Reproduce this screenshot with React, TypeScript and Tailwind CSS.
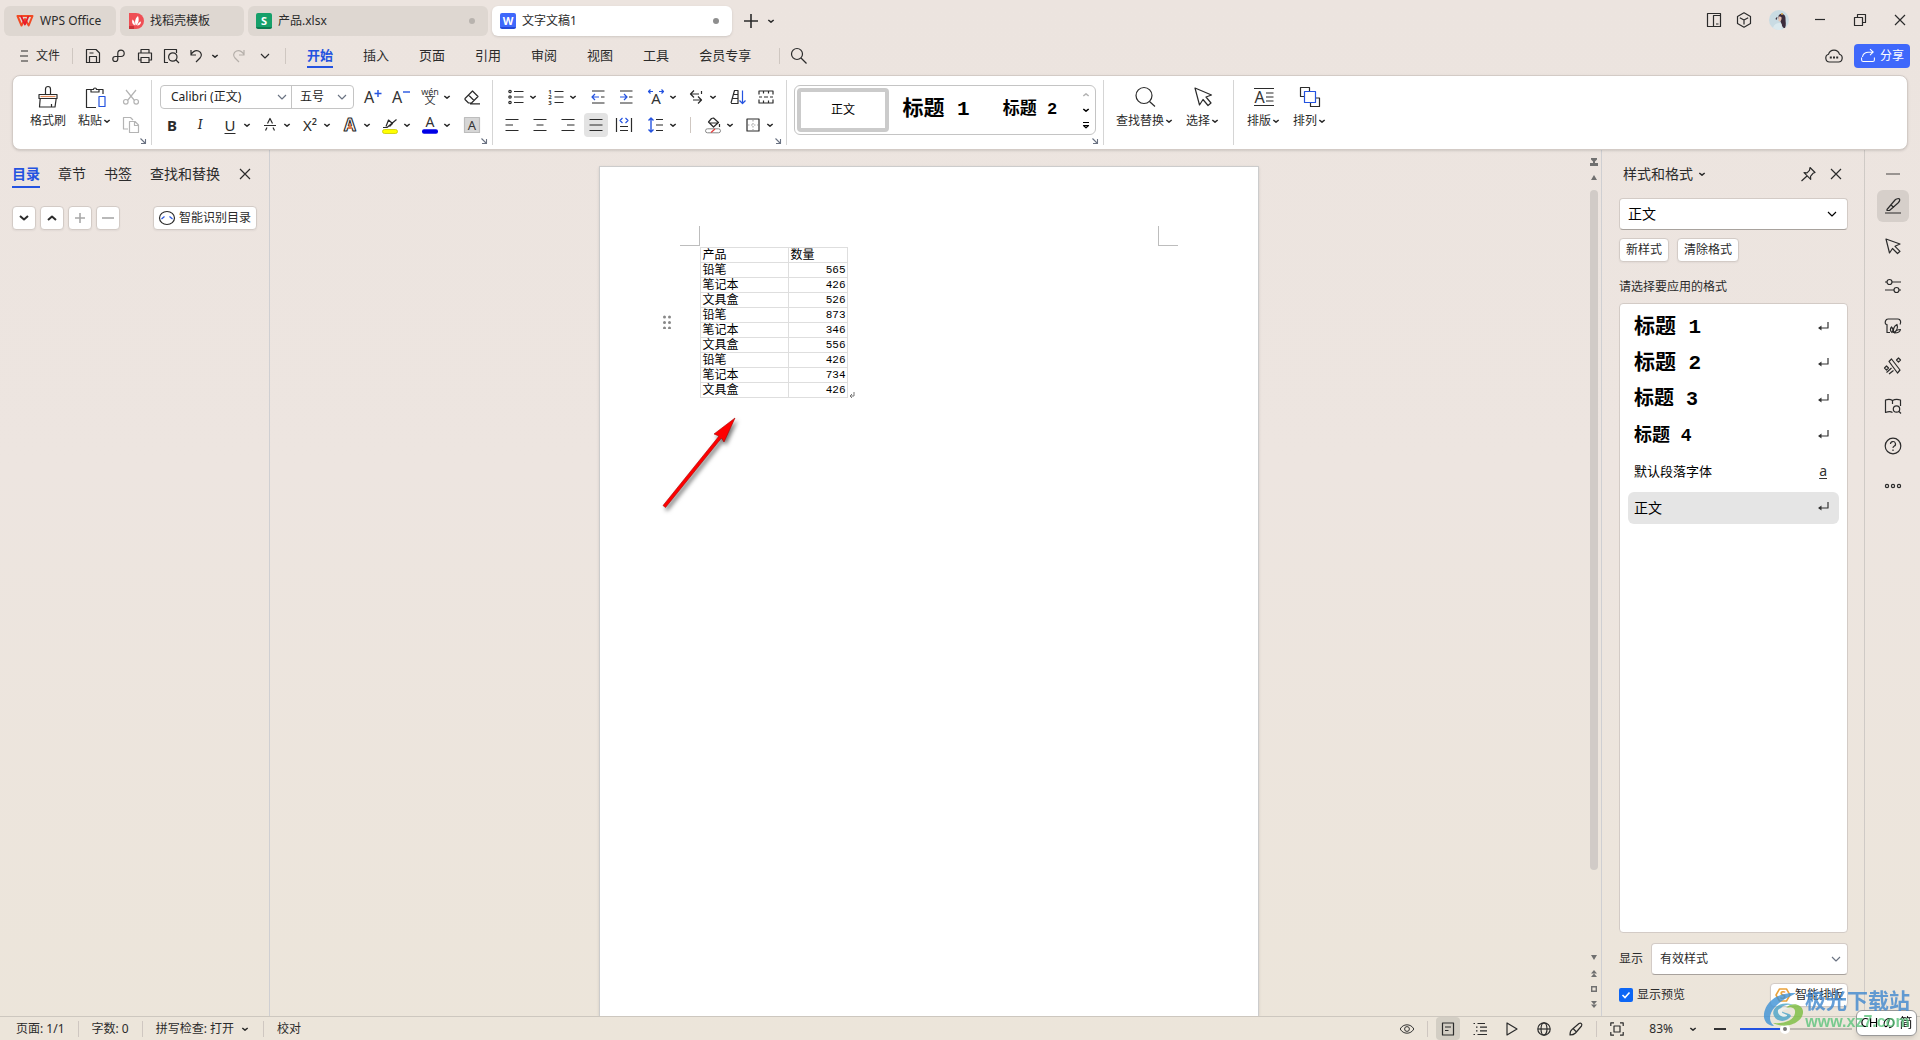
import React from "react";
import clsx from "clsx";

type IconProps = {
  children: React.ReactNode;
  className?: string;
  box?: number;
};

const Icon = ({ children, className = "w-5 h-5", box = 20 }: IconProps) => (
  <svg
    viewBox={`0 0 ${box} ${box}`}
    className={clsx("shrink-0 overflow-visible", className)}
    fill="none"
    stroke="currentColor"
    strokeWidth="1.2"
    strokeLinejoin="round"
    aria-hidden="true"
  >
    {children}
  </svg>
);

// Small bold arrow beside split buttons
const Caret = () => (
  <Icon className="w-2.5 h-2.5" box={10}>
    <path d="M2.300 4 5 6.200 7.700 4" strokeWidth="1.5" />
  </Icon>
);

// Thin arrow inside drop-downs
const Chevron = ({ className }: { className?: string }) => (
  <Icon className={clsx("w-2.5 h-2.5", className)} box={10}>
    <path d="M1 3 5 7 9 3" strokeWidth="1.1" />
  </Icon>
);

const Glyph = ({ x, y, size, children, fill = "#333", weight = 400 }: any) => (
  <text
    x={x}
    y={y}
    fontSize={size}
    fill={fill}
    stroke="none"
    fontWeight={weight}
    textAnchor="middle"
    fontFamily="Noto Sans, Noto Sans CJK SC, sans-serif"
  >
    {children}
  </text>
);

const BLUE = "#2453e0";

const icons = {
  brush: (
    <Icon className="w-6 h-6" box={24}>
      <path d="M3 9.500h18v4H3zM4.200 13.500 3.500 22h15.500l1.200-8.500M9.500 9.500V4a2.500 2.500 0 0 1 5 0v5.500M15.500 22v-3" />
      <path d="M4.500 11.500h15" stroke="#e08a5b" />
    </Icon>
  ),
  paste: (
    <Icon className="w-6 h-6" box={24}>
      <path d="M8 4.500H3.500v18H13M16 4.500h4V9M8 7V4.500h2.500a1.500 1.500 0 0 1 3 0H16V7z" />
      <path d="M16 11.500h6v10h-6z" stroke={BLUE} />
    </Icon>
  ),
  cut: (
    <Icon>
      <path d="M5 3l8.500 10.500M15 3 6.500 13.500" />
      <circle cx="4.800" cy="14.800" r="2.300" />
      <circle cx="15.200" cy="14.800" r="2.300" />
    </Icon>
  ),
  copy: (
    <Icon>
      <path d="M7 14H2.500V2.500h7L12 5M8.500 6.500h5.500l3.500 3.500v7.500h-9zM13.500 6.500V10.500h4" />
    </Icon>
  ),
  save: (
    <Icon>
      <path d="M3.500 3.500h9.500l3.500 3.500v9.500h-13zM6.500 16.500v-6h7v6M6.500 7h4" />
    </Icon>
  ),
  route: (
    <Icon>
      <path d="M7 10.500h5a3.200 3.200 0 1 0-3.200-3.200M13 10.500H6.300a2.500 2.500 0 1 0 2.500 2.500V7.300" />
    </Icon>
  ),
  print: (
    <Icon>
      <path d="M6 7V3.500h8V7M6 14H3.500V7h13v7H14M6 11.500h8v5H6z" />
    </Icon>
  ),
  preview: (
    <Icon>
      <path d="M7 16.500H3.500v-13h12V7M15 14l3 3" />
      <circle cx="11.800" cy="11" r="4.200" />
    </Icon>
  ),
  undo: (
    <Icon>
      <path d="M5 4v5h5M5 8.500c2-3 5-4.500 7.500-3.500 3.500 1.500 3.500 5 1.500 7L10 16" />
    </Icon>
  ),
  redo: (
    <Icon>
      <path d="M15 4v5h-5M15 8.500c-2-3-5-4.500-7.500-3.500C4 6.500 4 10 6 12l4 4" />
    </Icon>
  ),
  search: (
    <Icon>
      <circle cx="8" cy="8" r="5.500" />
      <path d="m12 12 5.500 5.500" />
    </Icon>
  ),
  fontUp: (
    <Icon>
      <Glyph x={7} y={16} size={16}>A</Glyph>
      <path d="M12.500 6.500h7M16 3v7" stroke={BLUE} strokeWidth="1.4" />
    </Icon>
  ),
  fontDown: (
    <Icon>
      <Glyph x={7} y={16} size={16}>A</Glyph>
      <path d="M13 5h7" stroke={BLUE} strokeWidth="1.4" />
    </Icon>
  ),
  pinyin: (
    <Icon>
      <Glyph x={10} y={8} size={9}>wén</Glyph>
      <Glyph x={10} y={17} size={11}>文</Glyph>
    </Icon>
  ),
  eraser: (
    <Icon>
      <path d="m3 11.500 7.500-7.500 5.500 5.500-6.500 6.500H6.500L3 12.500zM6.500 8 12 13.500M8 16.800h10" />
    </Icon>
  ),
  strike: (
    <Icon>
      <path d="M4 10.500h12M7.500 8.500 10 3.500l2.500 5M5.500 15.500 7 12.500M14.500 15.500 13 12.500" />
    </Icon>
  ),
  outlineA: (
    <Icon>
      <text x="10" y="16" fontSize="17" textAnchor="middle" fontWeight="700" fill="#fff" strokeWidth="1.1" fontFamily="Noto Sans, sans-serif">A</text>
      <path d="M10 8.500 8 13.500h4z" fill="#e07b45" stroke="#e07b45" strokeWidth=".8" />
    </Icon>
  ),
  highlight: (
    <Icon>
      <path d="M3 12.500h4l9.500-8M6 11.500 8.500 5l4 3.500-3 3" />
      <rect x="2.500" y="14.500" width="15" height="4" rx="2" fill="#ffff00" stroke="#c9c900" strokeWidth=".8" />
    </Icon>
  ),
  fontColor: (
    <Icon>
      <Glyph x={10} y={12} size={14}>A</Glyph>
      <rect x="2" y="14.200" width="16" height="4.600" rx="2" fill="#0000e6" stroke="none" />
    </Icon>
  ),
  shadedA: (
    <Icon>
      <rect x="2.500" y="2.500" width="15" height="15" fill="#d6d6d6" stroke="#bdbdbd" />
      <Glyph x={10} y={15} size={13}>A</Glyph>
    </Icon>
  ),
  bullets: (
    <Icon>
      <path d="M8 4.500h9.500M8 10h9.500M8 15.500h9.500" />
      <circle cx="4" cy="4.500" r="1.200" />
      <circle cx="4" cy="10" r="1.200" />
      <circle cx="4" cy="15.500" r="1.200" />
    </Icon>
  ),
  numbers: (
    <Icon>
      <path d="M8.500 4.500h9M8.500 10h9M8.500 15.500h9" />
      <Glyph x={4} y={6.500} size={6} weight={700}>1</Glyph>
      <Glyph x={4} y={12.200} size={6} weight={700}>2</Glyph>
      <Glyph x={4} y={18} size={6} weight={700}>3</Glyph>
    </Icon>
  ),
  outdent: (
    <Icon>
      <path d="M4 4h12.500M13 10h3.500M4 16h12.500" />
      <path d="M11 10H4M7 7l-3 3 3 3" stroke={BLUE} />
    </Icon>
  ),
  indent: (
    <Icon>
      <path d="M4 4h12.500M13 10h3.500M4 16h12.500" />
      <path d="M4 10h7M8 7l3 3-3 3" stroke={BLUE} />
    </Icon>
  ),
  charWidth: (
    <Icon>
      <Glyph x={10} y={17} size={15}>A</Glyph>
      <path d="M7 4.500H2.500M4.500 2.500l-2 2 2 2M13 4.500h4.500M15.500 2.500l2 2-2 2" stroke={BLUE} />
    </Icon>
  ),
  wrap: (
    <Icon>
      <path d="M8 3.500 4.500 7H13M4.500 7 8 10.500M12 9.500l3.500 3.500H7M15.500 13 12 16.500M15.500 4v3" />
    </Icon>
  ),
  sort: (
    <Icon>
      <path d="M3 16 6.500 3.500h3.500V16.500H3M5.500 7.500H10M4.500 11.500H10" />
      <path d="M14.500 3.500v13M11.500 13.500l3 3 3-3" stroke={BLUE} />
    </Icon>
  ),
  tableMark: (
    <Icon>
      <path d="M3 7.500V4h14v3.500M3 12.500V16h14v-3.500M7.500 4v2.500M12.500 4v2.500M7.500 16v-2.500M12.500 16v-2.500M3 10h3M8 10h4M14 10h3" />
    </Icon>
  ),
  left: <Icon><path d="M3.500 4.500h13M3.500 10h7.500M3.500 15.500h13" /></Icon>,
  center: <Icon><path d="M3.500 4.500h13M6.500 10h7M3.500 15.500h13" /></Icon>,
  right: <Icon><path d="M3.500 4.500h13M9 10h7.500M3.500 15.500h13" /></Icon>,
  justify: <Icon><path d="M3.500 4.500h13M3.500 10h13M3.500 15.500h13" /></Icon>,
  distribute: (
    <Icon>
      <path d="M2.500 3v14M17.500 3v14M6 11.500h8M6 15.500h8" />
      <path d="M8.500 3 6 5.500 8.500 8M11.500 3 14 5.500 11.500 8" stroke={BLUE} />
    </Icon>
  ),
  lineHeight: (
    <Icon>
      <path d="M10 4.500h7M10 10h7M10 15.500h7" />
      <path d="M5 3v14M2.500 5.500 5 3l2.500 2.500M2.500 14.500 5 17l2.500-2.500" stroke={BLUE} strokeWidth="1.4" />
    </Icon>
  ),
  fill: (
    <Icon>
      <path d="M8.500 3.500 5.500 7l5 5 5-4.500-5-4.500zM6 8h9M16.500 9v3" />
      <rect x="2.500" y="13.800" width="15" height="4" rx="2" fill="#fff" stroke="#888" strokeWidth="1" />
      <path d="m8 17.500 4-3.500" stroke="#e23b3b" />
    </Icon>
  ),
  border: (
    <Icon>
      <rect x="4" y="4" width="12" height="12" />
      <path d="M10 5v10M5 10h10" stroke="#aaa" strokeDasharray="1.500 1.500" />
    </Icon>
  ),
  find: (
    <Icon className="w-6 h-6" box={24}>
      <circle cx="11" cy="10.500" r="8" />
      <path d="m16.500 16.500 5.500 5" />
    </Icon>
  ),
  pointer: (
    <Icon className="w-6 h-6" box={24}>
      <path d="m4 3 4.500 17 3.500-5.500 5 6 3-2.500-5-6 5.500-2z" />
    </Icon>
  ),
  typeset: (
    <Icon className="w-6 h-6" box={24}>
      <path d="M2 3.500h20M2 20.500h20M14 8h7.500M14 12h7.500M14 16h7.500" />
      <Glyph x={7.500} y={17.500} size={16}>A</Glyph>
    </Icon>
  ),
  arrange: (
    <Icon className="w-6 h-6" box={24}>
      <path d="M6 11.500H2.500v-9h9V6M18 13h3.500v8.500h-9V18" />
      <path d="M6.500 6.500h11v11h-11z" stroke={BLUE} />
    </Icon>
  ),
  close: <Icon><path d="m5 5 10 10M15 5 5 15" /></Icon>,
  cloud: (
    <Icon>
      <path d="M5.500 16a4 4 0 0 1-.9-7.800 5.600 5.600 0 0 1 10.800 0 4 4 0 0 1-.9 7.800z" />
      <path d="M5.800 11.500h2M9 11.500h2M12.200 11.500h2" strokeWidth="1.800" />
    </Icon>
  ),
  pin: (
    <Icon>
      <path d="m12 3.500 5 5-2 .8-2.500 3 .2 3-6.700-6.700 3 .2 2.500-2.500zM9 12l-5.500 5" />
    </Icon>
  ),
  pen: (
    <Icon>
      <path d="M2 17h16M4 13.500l8-9.500c1-1 4-2 4.500-1s-.5 3-1.500 4l-8.500 7.500H4zM8 9l3 2.500" />
    </Icon>
  ),
  cursor: (
    <Icon>
      <path d="m3 3 3.500 14 3-4.500 5 5 2.500-2.200-5-5L17 8z" />
    </Icon>
  ),
  sliders: (
    <Icon>
      <circle cx="6.500" cy="6" r="2.500" />
      <circle cx="13.500" cy="14" r="2.500" />
      <path d="M2 6h2M9 6h9M2 14h9M16 14h2" />
    </Icon>
  ),
  material: (
    <Icon>
      <path d="M7 16.500H4V8.500c-2 0-2-2-1.500-3.500s1-2 2.500-2h10c1.500 0 2 .5 2.500 2s0 2.500-.5 3.500" />
      <path d="M9 16.500c-2-1.500-2-4-.5-5.500 1.500 1.500 2 3.500.5 5.500zM10.500 16.500c-.5-3 1-6.500 3.500-8 1 3 0 6.500-3.500 8zM11.500 17c1-2 3.500-3.500 6-3.500-.5 2.500-3 3.500-6 3.500z" />
    </Icon>
  ),
  tools: (
    <Icon>
      <path d="m6 5.500 2.500-2.500 8.500 11-2.500 3zM3.500 16.500l5-4.500M6 18l4.500-3.500M6 5.500l3 4" />
      <path d="m15.500 2 2 2-2 2-2-2zM3.500 10l2 2-2 2-2-2z" />
    </Icon>
  ),
  book: (
    <Icon>
      <path d="M9.500 16.500c-2-1.500-4.500-1-7 0V4c2.500-1 5-1 7 .5 2.500-1.500 5-1.500 8-.5v6M9.500 4.500V8M16 15.500l2 2" />
      <circle cx="13.500" cy="13" r="3.200" />
    </Icon>
  ),
  help: (
    <Icon>
      <circle cx="10" cy="10" r="7.800" />
      <path d="M7.500 8a2.500 2.500 0 1 1 3.500 2.300c-.8.400-1 .8-1 1.700M10 13.500v1.400" />
    </Icon>
  ),
  more: (
    <Icon>
      <circle cx="4" cy="10" r="1.600" />
      <circle cx="10" cy="10" r="1.600" />
      <circle cx="16" cy="10" r="1.600" />
    </Icon>
  ),
  eye: (
    <Icon className="w-4 h-4">
      <path d="M1.500 10C5 3 15 3 18.500 10 15 17 5 17 1.500 10z" />
      <circle cx="10" cy="10" r="3" />
    </Icon>
  ),
  page: (
    <Icon className="w-4 h-4" box={16}>
      <path d="M2.500 2h11v12h-11zM5 6h6M5 9.500h3.500" />
    </Icon>
  ),
  outline: (
    <Icon className="w-4 h-4" box={16}>
      <path d="M1.500 2.500H3M5.500 2.500H13M4 6.200h1.500M8 6.200h7M4 9.800h1.500M8 9.800h7M1.500 13.500H3M5.500 13.500h9.500" />
    </Icon>
  ),
  play: <Icon className="w-4 h-4" box={16}><path d="M3 2v12l10-6z" /></Icon>,
  globe: (
    <Icon className="w-4 h-4" box={16}>
      <circle cx="8" cy="8" r="6.200" />
      <ellipse cx="8" cy="8" rx="3" ry="6.200" />
      <path d="M2 8h12" />
    </Icon>
  ),
  marker: (
    <Icon className="w-4 h-4" box={16}>
      <path d="M2 14c0-3 .5-4.500 2-5.500L11 2.500c2-1 3.500.5 2.500 2.500L7.500 12c-1.500 1.500-3 2-5.500 2zM5.500 8l2.500 2.500" />
    </Icon>
  ),
  fit: (
    <Icon className="w-4 h-4" box={16}>
      <path d="M1.800 5V1.800H5M11 1.800h3.200V5M14.200 11v3.200H11M5 14.200H1.800V11M5 5h6v6H5z" />
    </Icon>
  ),
};

type IconName = keyof typeof icons;

const IconButton = ({
  icon,
  label,
  className = "w-7 h-7",
}: {
  icon: IconName;
  label: string;
  className?: string;
}) => (
  <button aria-label={label} className={clsx("flex items-center justify-center shrink-0", className)}>
    {icons[icon]}
  </button>
);

const SplitButton = ({ icon, label, children }: { icon?: IconName; label: string; children?: React.ReactNode }) => (
  <button aria-label={label} className="w-10 h-7 flex items-center shrink-0">
    <span className="w-6 flex justify-center">{icon ? icons[icon] : children}</span>
    <Caret />
  </button>
);

const BigButton = ({
  icon,
  label,
  caret = false,
  className,
}: {
  icon: IconName;
  label: string;
  caret?: boolean;
  className: string;
}) => (
  <button className={clsx("flex flex-col items-center pt-0.5 gap-1 shrink-0 whitespace-nowrap", className)}>
    {icons[icon]}
    <span className="flex items-center">
      {label}
      {caret && <Caret />}
    </span>
  </button>
);

const Launcher = () => (
  <button aria-label="更多设置" className="absolute right-1 bottom-0 text-gray-500">
    <Icon className="w-2 h-2" box={8}>
      <path d="M1.500 1.500 6 6M6.500 2v4.500H2" strokeWidth="1.100" />
    </Icon>
  </button>
);

const Group = ({ children, className }: { children: React.ReactNode; className?: string }) => (
  <div className={clsx("relative flex shrink-0 border-r border-[#d5d5d5] my-1 pt-[3px]", className)}>{children}</div>
);

const Divider = ({ className = "mx-[13px]" }: { className?: string }) => (
  <span className={clsx("w-px h-4 bg-[#cfc7c1] shrink-0", className)} />
);

const DocBadge = ({ letter, className }: { letter: string; className: string }) => (
  <span
    className={clsx(
      "w-4 h-4 rounded-[2px] border-b-2 flex items-center justify-center text-white font-bold text-[11px] leading-none",
      className
    )}
  >
    {letter}
  </span>
);

const TitleBar = () => (
  <header className="flex items-start pt-1.5 pl-1 gap-1 shrink-0">
    <button className="w-28 h-[30px] rounded-md bg-[#ded7d1] flex items-center pl-3 gap-1.5">
      <svg viewBox="0 0 18 14" className="w-[18px] h-[14px]" fill="none" strokeLinejoin="round" aria-hidden="true">
        <path d="M1.500 2h15l-3.800 9.500L9 5l-3.500 6.500z" stroke="#f04a24" strokeWidth="2" />
        <path d="m5 2 4 8.500L12.500 2" stroke="#e8192c" strokeWidth="1.800" />
      </svg>
      WPS Office
    </button>
    <button className="w-[124px] h-[30px] rounded-md bg-[#ded7d1] flex items-center pl-2 gap-1.5">
      <svg viewBox="0 0 16 16" className="w-4 h-4" aria-hidden="true">
        <path d="M1 0h7a8 8 0 0 1 0 16H1z" fill="#ef4f55" />
        <path d="M1 13h5v3H1z" fill="#c93238" />
        <path d="M7 12.500C3.500 11 4 8 4.500 6.500 6 7.500 7 9.500 7 12.500zM7.800 12.500C6 8 8 4.500 10 3c1.500 4 .5 7.500-2.200 9.500zM9 12.500c1-2 2-3.500 4-4 0 2.500-1.500 4-4 4z" fill="#fff" />
      </svg>
      找稻壳模板
    </button>
    <button className="w-60 h-[30px] rounded-md bg-[#ded7d1] flex items-center px-2 gap-1.5">
      <DocBadge letter="S" className="bg-[#16a06a] border-[#0b7c50]" />
      产品.xlsx
      <span className="ml-auto mr-[5px] w-1.5 h-1.5 rounded-full bg-[#b8b3ae]" />
    </button>
    <button className="w-60 h-[30px] rounded-md bg-white shadow-sm flex items-center px-2 gap-1.5">
      <DocBadge letter="W" className="bg-[#3f68fb] border-[#2448d8]" />
      文字文稿1
      <span className="ml-auto mr-[5px] w-1.5 h-1.5 rounded-full bg-[#8e8e8e]" />
    </button>
    <div className="h-[30px] flex items-center pl-[5px]">
      <button aria-label="新建" className="w-5">
        <Icon className="w-5 h-5"><path d="M3 10h14M10 3v14" strokeWidth="1.600" /></Icon>
      </button>
      <button aria-label="标签列表" className="w-5 flex justify-center"><Caret /></button>
    </div>
    <div className="ml-auto h-7 flex items-center">
      <button aria-label="侧栏" className="w-8 flex justify-center">
        <Icon className="w-4 h-4" box={16}><path d="M7.500 14.500h-6v-13h13v13h-7zM7.500 14.500V3.500h7M10 12h2.500" /></Icon>
      </button>
      <button aria-label="应用" className="w-7 flex justify-center">
        <Icon className="w-4 h-4" box={16}><path d="m8 .800 6.500 3.600v7.200L8 15.200l-6.500-3.600V4.400zM3.800 5.800 8 8l4.200-2.200M8 8v4.500" /></Icon>
      </button>
      <button aria-label="账号" className="w-[42px] flex justify-center">
        <svg viewBox="0 0 20 20" className="w-5 h-5" aria-hidden="true">
          <circle cx="10" cy="10" r="10" fill="#c9dbe3" />
          <path d="M10 5c3-3 7 0 6.500 4 0 3 1 6-.5 9-2 .5-3-2-3.500-4L11 10c-1.500 0-2-4-1-5z" fill="#3a2c3c" />
          <path d="M9.500 7c1.500-1 3.500-.5 3 2s-2 3-3 2z" fill="#e6bfae" />
          <path d="M4 18c1-4 4-5 7-5 2 0 2 3 1.500 6.700A10 10 0 0 1 4 18z" fill="#dbe9ee" />
          <path d="M6.500 9c.5-1.500 1.500-2 2-1.500L7.500 10z" fill="#3a2c3c" />
          <circle cx="13" cy="4" r="1" fill="#d8a64e" />
        </svg>
      </button>
      <button aria-label="最小化" className="w-10 flex justify-center">
        <Icon className="w-3 h-3" box={12}><path d="M1 5.500h10" /></Icon>
      </button>
      <button aria-label="还原" className="w-10 flex justify-center">
        <Icon className="w-3 h-3" box={12}><path d="M.500 3.500h8v8h-8zM3.500 3.500v-3h8v8h-3" /></Icon>
      </button>
      <button aria-label="关闭" className="w-10 flex justify-center">
        <Icon className="w-3 h-3" box={12}><path d="m1 1 10 10M11 1 1 11" /></Icon>
      </button>
    </div>
  </header>
);

const menus = ["插入", "页面", "引用", "审阅", "视图", "工具", "会员专享"];

const MenuBar = () => (
  <nav className="h-[39px] flex items-center pl-4 pr-2.5 shrink-0">
    <button className="flex items-center gap-1">
      <Icon className="w-4 h-4" box={16}><path d="M5 3h7M4 8h8M5 13h7" /></Icon>
      文件
    </button>
    <Divider className="ml-3 mr-[7px]" />
    <IconButton icon="save" label="保存" className="w-[26px]" />
    <IconButton icon="route" label="输出" className="w-[26px]" />
    <IconButton icon="print" label="打印" className="w-[26px]" />
    <IconButton icon="preview" label="打印预览" className="w-[26px]" />
    <button aria-label="撤销" className="w-[42px] flex items-center pl-0.5">
      <span className="w-6">{icons.undo}</span>
      <Caret />
    </button>
    <IconButton icon="redo" label="恢复" className="w-[26px] text-[#b5afaa]" />
    <button aria-label="自定义" className="w-[26px] flex justify-center"><Chevron /></button>
    <Divider className="ml-[7px] mr-[21px]" />
    <div className="flex gap-[30px] text-[13px]">
      <a href="#" className="font-bold text-[#2453e0] border-b-2 border-[#2453e0] mt-1 pb-0.5">开始</a>
      {menus.map((m) => (
        <a key={m} href="#" className="mt-1">{m}</a>
      ))}
    </div>
    <Divider className="ml-7 mr-[5px]" />
    <IconButton icon="search" label="搜索" />
    <div className="ml-auto flex items-center gap-2">
      <IconButton icon="cloud" label="云同步" className="w-6" />
      <button className="w-14 h-6 rounded bg-[#3f68fb] text-white flex items-center justify-center gap-1">
        <svg viewBox="0 0 20 20" className="w-4 h-4" fill="none" stroke="currentColor" strokeWidth="1.300" aria-hidden="true">
          <path d="M2 12v3a2 2 0 0 0 2 2h12a2 2 0 0 0 2-2v-3M3 11c1-5 4-6 13-6M12.500 1.500 16.500 5l-4 4" />
        </svg>
        分享
      </button>
    </div>
  </nav>
);

const headingFont = "font-bold font-[Liberation_Mono,Noto_Sans_CJK_SC,monospace]";

const Ribbon = () => (
  <section className="mx-3 h-[75px] rounded-lg bg-white border border-[#d3cbc6] shadow-sm flex shrink-0 relative z-10">
    <Group className="pl-3 pr-2">
      <BigButton icon="brush" label="格式刷" className="w-[46px]" />
      <BigButton icon="paste" label="粘贴" caret className="w-12" />
      <div className="text-[#b4b4b4]">
        <IconButton icon="cut" label="剪切" className="w-6 h-7" />
        <IconButton icon="copy" label="复制" className="w-6 h-7" />
      </div>
      <Launcher />
    </Group>

    <Group className="pl-2 pr-1.5">
      <div>
        <div className="flex items-center">
          <div className="flex h-6 rounded border border-[#c4c4c4] text-[#222]">
            <label className="relative w-[131px] flex items-center border-r border-[#c4c4c4]">
              <select aria-label="字体" className="appearance-none w-full pl-2.5 outline-none">
                <option>Calibri (正文)</option>
              </select>
              <Chevron className="absolute right-1 pointer-events-none text-gray-500" />
            </label>
            <label className="relative w-[61px] flex items-center">
              <select aria-label="字号" className="appearance-none w-full pl-2 outline-none">
                <option>五号</option>
              </select>
              <Chevron className="absolute right-1.5 pointer-events-none text-gray-500" />
            </label>
          </div>
          <IconButton icon="fontUp" label="增大字号" className="w-7 h-7 ml-1" />
          <IconButton icon="fontDown" label="减小字号" />
          <span className="w-1" />
          <SplitButton icon="pinyin" label="拼音指南" />
          <IconButton icon="eraser" label="清除格式" />
        </div>
        <div className="flex items-center text-[15px]">
          <button className="w-7 h-7 ml-[-2px] font-bold">B</button>
          <button className="w-7 h-7 italic font-serif">I</button>
          <span className="w-1" />
          <SplitButton label="下划线"><span className="underline underline-offset-2">U</span></SplitButton>
          <SplitButton icon="strike" label="删除线" />
          <SplitButton label="上标"><span className="leading-4">X²</span></SplitButton>
          <SplitButton icon="outlineA" label="文字效果" />
          <SplitButton icon="highlight" label="突出显示" />
          <SplitButton icon="fontColor" label="字体颜色" />
          <IconButton icon="shadedA" label="字符底纹" />
        </div>
      </div>
      <Launcher />
    </Group>

    <Group className="pl-[5px] pr-[5px]">
      <div>
        <div className="flex items-center pl-1.5">
          <SplitButton icon="bullets" label="项目符号" />
          <SplitButton icon="numbers" label="编号" />
          <IconButton icon="outdent" label="减少缩进" />
          <IconButton icon="indent" label="增加缩进" />
          <span className="w-1" />
          <SplitButton icon="charWidth" label="中文版式" />
          <SplitButton icon="wrap" label="换行" />
          <IconButton icon="sort" label="排序" />
          <IconButton icon="tableMark" label="制表位" />
        </div>
        <div className="flex items-center">
          <IconButton icon="left" label="左对齐" />
          <IconButton icon="center" label="居中" />
          <IconButton icon="right" label="右对齐" />
          <IconButton icon="justify" label="两端对齐" className="w-6 h-6 mx-0.5 rounded bg-[#e3e3e3]" />
          <IconButton icon="distribute" label="分散对齐" />
          <span className="w-1.5" />
          <SplitButton icon="lineHeight" label="行距" />
          <Divider className="ml-1.5 mr-2.5" />
          <SplitButton icon="fill" label="底纹" />
          <SplitButton icon="border" label="边框" />
        </div>
      </div>
      <Launcher />
    </Group>

    <Group className="pl-[7px] pr-[7px]">
      <div className="mt-0.5 w-[302px] h-[50px] rounded-md border border-[#c4c4c4] flex items-center text-black">
        <button className="w-[92px] h-11 ml-0.5 rounded border-4 border-[#cbcbcb]">正文</button>
        <button className={clsx("w-[94px] text-[21px]", headingFont)}>标题 1</button>
        <button className={clsx("w-[94px] text-[17px]", headingFont)}>标题 2</button>
        <div className="flex-1 h-full flex flex-col items-center justify-between py-1">
          <button aria-label="上一行" className="rotate-180 text-[#b4b4b4]"><Caret /></button>
          <button aria-label="下一行"><Caret /></button>
          <button aria-label="展开">
            <Icon className="w-2.5 h-2.5" box={10}><path d="M2 2.500h6M2.500 5.500 5 7.800 7.500 5.500z" /></Icon>
          </button>
        </div>
      </div>
      <Launcher />
    </Group>

    <Group className="pl-[5px] pr-2">
      <BigButton icon="find" label="查找替换" caret className="w-[72px]" />
      <BigButton icon="pointer" label="选择" caret className="w-11" />
    </Group>
    <div className="flex my-1 pt-[3px] pl-[7px]">
      <BigButton icon="typeset" label="排版" caret className="w-[46px]" />
      <BigButton icon="arrange" label="排列" caret className="w-[46px]" />
    </div>
  </section>
);

const tool = "h-6 rounded bg-white border border-[#d3cbc6] shadow-xs flex items-center justify-center";

const OutlinePanel = () => (
  <aside className="w-[270px] border-r border-[#cfcfd2] pt-3 pl-3 shrink-0">
    <div className="flex items-start text-sm leading-6">
      <button className="font-bold text-[#2453e0] border-b-2 border-[#2453e0] mr-[18px]">目录</button>
      <button className="mr-[18px]">章节</button>
      <button className="mr-[18px]">书签</button>
      <button>查找和替换</button>
      <IconButton icon="close" label="关闭" className="w-5 h-6 ml-[15px]" />
    </div>
    <div className="flex gap-1 mt-[18px]">
      <button aria-label="展开" className={clsx(tool, "w-6")}>
        <Icon className="w-3 h-3" box={12}><path d="m2 4 4 3.500L10 4" strokeWidth="2" /></Icon>
      </button>
      <button aria-label="收起" className={clsx(tool, "w-6")}>
        <Icon className="w-3 h-3" box={12}><path d="m2 8 4-3.500L10 8" strokeWidth="2" /></Icon>
      </button>
      <button aria-label="增加级别" className={clsx(tool, "w-6 text-[#a8a8a8]")}>
        <Icon className="w-3 h-3" box={12}><path d="M1 6h10M6 1v10" strokeWidth="1.600" /></Icon>
      </button>
      <button aria-label="减少级别" className={clsx(tool, "w-6 text-[#a8a8a8]")}>
        <Icon className="w-3 h-3" box={12}><path d="M0 6h12" strokeWidth="1.600" /></Icon>
      </button>
      <button className={clsx(tool, "w-[104px] ml-[29px] gap-1")}>
        <Icon className="w-4 h-4" box={16}>
          <ellipse cx="8" cy="8" rx="7.500" ry="6.500" />
          <path d="M2.500 9 5.500 6.500M13.500 9l-3-2.500" stroke={BLUE} />
        </Icon>
        智能识别目录
      </button>
    </div>
  </aside>
);

const rows: [string, number][] = [
  ["铅笔", 565],
  ["笔记本", 426],
  ["文具盒", 526],
  ["铅笔", 873],
  ["笔记本", 346],
  ["文具盒", 556],
  ["铅笔", 426],
  ["笔记本", 734],
  ["文具盒", 426],
];

const Document = () => (
  <main className="flex-1 min-w-0 flex">
    <div className="flex-1 flex justify-center pt-4 overflow-hidden">
      <div className="relative w-[660px] bg-white border border-b-0 border-[#cccccc] shadow-sm pt-[59px] pl-20">
        <div className="flex justify-between pr-20 text-[#bdbdbd]">
          <span className="w-5 h-5 border-r border-b border-[#bdbdbd]" />
          <span className="w-5 h-5 border-l border-b border-[#bdbdbd]" />
        </div>
        <table className="ml-5 mt-px border-collapse w-[148px] text-xs leading-[14px] text-black">
          <thead>
            <tr>
              <th className="border border-[#dedede] font-normal text-left px-0.5 w-[88px] py-0">产品</th>
              <th className="border border-[#dedede] font-normal text-left px-0.5 py-0">数量</th>
            </tr>
          </thead>
          <tbody>
            {rows.map(([name, qty], i) => (
              <tr key={i}>
                <td className="border border-[#dedede] px-0.5 py-0">{name}</td>
                <td className="border border-[#dedede] px-px py-0 text-right text-[11px] leading-[14px] font-[Liberation_Mono,monospace]">{qty}</td>
              </tr>
            ))}
          </tbody>
        </table>
        {/* paragraph mark after the table */}
        <svg viewBox="0 0 6 7" className="absolute left-[249px] top-[225px] w-1.5 h-[7px]" fill="none" stroke="#777" aria-hidden="true">
          <path d="M5 0v4H1M3 2 1 4l2 2" />
        </svg>
        {/* table drag handle */}
        <svg viewBox="0 0 10 14" className="absolute left-[62px] top-[148px] w-2.5 h-3.5" fill="#888" aria-hidden="true">
          {[2, 7.5, 13].map((y) => (
            <g key={y}>
              <circle cx="2.500" cy={y} r="1.500" />
              <circle cx="7.500" cy={y} r="1.500" />
            </g>
          ))}
        </svg>
        {/* red annotation arrow */}
        <svg viewBox="0 0 86 100" className="absolute left-[59px] top-[245px] w-[86px] h-[100px] drop-shadow-[2px_3px_2px_rgba(0,0,0,0.55)]" aria-hidden="true">
          <path d="M4 93.500 60 24 55 22 76 6 65 30 62.500 26 6.500 95.500z" fill="#fe0000" stroke="#a00" strokeWidth=".6" />
        </svg>
      </div>
    </div>
    <div className="w-[14px] flex flex-col items-center text-[#707070] pt-2 pb-2 shrink-0">
      <svg viewBox="0 0 8 9" className="w-2 h-[9px]" fill="currentColor" aria-hidden="true">
        <path d="M1 0h6v1.500L5 3.500v1.500h3v3H0V5h3V3.500L1 1.500z" />
      </svg>
      <svg viewBox="0 0 6 5" className="w-1.5 h-[5px] mt-2" fill="currentColor" aria-hidden="true"><path d="M3 0 6 5H0z" /></svg>
      <div className="w-2 flex-1 mt-2.5 mb-[85px] rounded-full bg-[#d1cbc7]" />
      <svg viewBox="0 0 6 53" className="w-1.5 h-[53px]" fill="currentColor" aria-hidden="true">
        <path d="M0 0h6L3 5zM3 15l3 3.500H0zM3 18.500 6 22H0zM0 49.500h6L3 53zM0 46h6l-3 3.500z" />
        <path d="M.7 31.700h4.600v4.600H.7z" fill="none" stroke="currentColor" strokeWidth="1.400" />
      </svg>
    </div>
  </main>
);

const ReturnMark = () => (
  <Icon className="w-3 h-3" box={12}>
    <path d="M11 0v6H2" />
    <path d="M1 6 4.500 3.500v5z" fill="currentColor" stroke="none" />
  </Icon>
);

const styles = [
  { name: "标题 1", cls: clsx("text-[21px]", headingFont) },
  { name: "标题 2", cls: clsx("text-[21px]", headingFont) },
  { name: "标题 3", cls: clsx("text-[20px]", headingFont) },
  { name: "标题 4", cls: clsx("text-[18px]", headingFont) },
  { name: "默认段落字体", cls: "text-[13px]", mark: "a" },
  { name: "正文", cls: "text-sm", active: true },
];

const StylePanel = () => (
  <aside className="w-[263px] border-l border-[#cfcfd2] pl-[17px] pr-4 pb-[9px] flex flex-col shrink-0">
    <div className="h-12 flex items-center -mr-0.5 shrink-0">
      <button className="flex items-center gap-1 text-sm pl-1">
        样式和格式
        <Caret />
      </button>
      <IconButton icon="pin" label="固定" className="w-7 h-7 ml-auto" />
      <IconButton icon="close" label="关闭" />
    </div>
    <label className="relative h-8 flex items-center rounded bg-white border border-[#d3cbc6] border-b-[#a8a29d] text-black shrink-0">
      <select aria-label="当前样式" className="appearance-none w-full h-full pl-2 text-sm outline-none">
        <option>正文</option>
      </select>
      <Chevron className="absolute right-2.5 pointer-events-none" />
    </label>
    <div className="flex gap-2 mt-2 shrink-0">
      <button className={clsx(tool, "px-1.5")}>新样式</button>
      <button className={clsx(tool, "px-1.5")}>清除格式</button>
    </div>
    <p className="mt-[17px] mb-2 leading-4">请选择要应用的格式</p>
    <ul className="flex-1 rounded bg-white border border-[#d3cbc6] px-2 py-1.5 text-black">
      {styles.map((s) => (
        <li key={s.name} className="py-0.5">
          <button className={clsx("w-full h-8 rounded-md flex items-center pl-1.5 pr-2.5", s.active && "bg-[#e5e5e5]")}>
            <span className={s.cls}>{s.name}</span>
            <span className="ml-auto text-[#333]">
              {s.mark ? <span className="text-sm leading-3 underline underline-offset-2 pr-0.5">{s.mark}</span> : <ReturnMark />}
            </span>
          </button>
        </li>
      ))}
    </ul>
    <div className="flex items-center mt-2.5 shrink-0">
      <label htmlFor="filter" className="w-8">显示</label>
      <div className="relative flex-1 h-8 flex items-center rounded bg-white border border-[#d3cbc6] border-b-[#a8a29d]">
        <select id="filter" className="appearance-none w-full h-full pl-2 outline-none">
          <option>有效样式</option>
        </select>
        <Chevron className="absolute right-1.5 pointer-events-none text-gray-500" />
      </div>
    </div>
    <div className="flex items-center mt-2 shrink-0">
      <label className="flex items-center gap-1">
        <span className="relative flex">
          <input type="checkbox" defaultChecked className="appearance-none w-3.5 h-3.5 rounded-xs bg-[#0d66f5]" />
          <svg viewBox="0 0 14 14" className="absolute inset-0 w-3.5 h-3.5 pointer-events-none" fill="none" stroke="#fff" strokeWidth="1.600" aria-hidden="true">
            <path d="m3.500 7 2.500 2.500 4.500-5" />
          </svg>
        </span>
        显示预览
      </label>
      <button className={clsx(tool, "ml-auto px-1 gap-1")}>
        <Icon className="w-4 h-4" box={16}>
          <path d="M4.500 2h7L15 8l-3.500 6h-7L1 8z" stroke="#eaa23b" strokeWidth="1.500" />
          <Glyph x={8} y={12} size={11} fill="#eaa23b" weight={700}>S</Glyph>
        </Icon>
        智能排版
      </button>
    </div>
  </aside>
);

const railIcons: [IconName, string][] = [
  ["pen", "样式和格式"],
  ["cursor", "选择"],
  ["sliders", "属性"],
  ["material", "素材"],
  ["tools", "工具"],
  ["book", "查阅"],
  ["help", "帮助"],
  ["more", "更多"],
];

const Rail = () => (
  <aside className="w-[56px] border-l border-[#cfcac6] flex flex-col items-center gap-2 shrink-0">
    <button aria-label="收起侧栏" className="h-8 flex items-end pb-[7px]">
      <span className="w-3.5 h-0.5 bg-[#999491]" />
    </button>
    {railIcons.map(([icon, label]) => (
      <IconButton
        key={icon}
        icon={icon}
        label={label}
        className={clsx("w-8 h-8 rounded-md", icon === "pen" && "bg-[#d6cfca]")}
      />
    ))}
  </aside>
);

const StatusBar = () => (
  <footer className="h-6 border-t border-[#cdc7bf] flex items-center pl-4 pr-2 shrink-0">
    <span>页面: 1/1</span>
    <Divider />
    <span>字数: 0</span>
    <Divider />
    <button className="flex items-center gap-1.5">
      拼写检查: 打开
      <Caret />
    </button>
    <Divider />
    <button>校对</button>
    <div className="ml-auto flex items-center">
      <IconButton icon="eye" label="护眼模式" className="w-8 h-5" />
      <Divider className="mx-1" />
      <IconButton icon="page" label="页面视图" className="w-6 h-[23px] mx-1 rounded bg-[#d3cec4]" />
      <IconButton icon="outline" label="大纲" className="w-8 h-5" />
      <IconButton icon="play" label="播放" className="w-8 h-5" />
      <IconButton icon="globe" label="Web 版式" className="w-8 h-5" />
      <IconButton icon="marker" label="书写" className="w-8 h-5" />
      <Divider className="mx-1" />
      <IconButton icon="fit" label="适合页面" className="w-8 h-5" />
      <button className="flex items-center gap-[15px] ml-4">
        83%
        <Caret />
      </button>
      <button aria-label="缩小" className="ml-4 mr-3.5 w-3 h-0.5 bg-[#333]" />
      <input
        type="range"
        aria-label="缩放"
        defaultValue={39}
        className="appearance-none w-[112px] h-0.5 mr-[60px] bg-[linear-gradient(to_right,#2453e0_39%,#bdb8b0_39%)] [&::-webkit-slider-thumb]:appearance-none [&::-webkit-slider-thumb]:w-2.5 [&::-webkit-slider-thumb]:h-2.5 [&::-webkit-slider-thumb]:rounded-full [&::-webkit-slider-thumb]:bg-[#777] [&::-webkit-slider-thumb]:border-[3px] [&::-webkit-slider-thumb]:border-solid [&::-webkit-slider-thumb]:border-white"
      />
    </div>
  </footer>
);

const InputMethod = () => (
  <div className="fixed right-[3px] bottom-1 w-[61px] h-[26px] rounded-md bg-white border border-[#999] shadow-md flex items-center justify-center gap-1 text-[13px] text-black">
    <span>CH</span>
    <span>の</span>
    <span>简</span>
  </div>
);

const Watermark = () => (
  <div className="fixed right-2.5 bottom-2 flex items-center opacity-80 pointer-events-none">
    <svg viewBox="0 0 42 40" className="w-[42px] h-10" aria-hidden="true">
      <path d="M33 3C15 2 3 11 1 24c-1 7 4 12 10 12-7-6-4-15 3-21 6-6 13-8 19-12z" fill="#3d92d6" />
      <path d="M10 33c12 1 21-3 22-10 1-5-4-7-9-5 4-6 16-5 17 3 1 11-16 19-30 12z" fill="#7bbd3f" />
      <path d="M11 26c-4-8 8-16 19-11-8-1-13 2-12 5 1 4 9 2 10 6-3 6-14 7-17 0z" fill="#4aa3c9" />
      <path d="M15 20c4-4 10-3 11-1-4 0-7 1-7 3s6 2 5 4c-3 2-10 0-9-6z" fill="#eef3f2" />
    </svg>
    <div className="flex flex-col items-center font-bold">
      <span className="text-[21px] leading-6 text-[#3f87cf]">极光下载站</span>
      <span className="text-base leading-5 text-[#5cc37c] font-[Liberation_Sans,sans-serif]">www.xz7.com</span>
    </div>
  </div>
);

export default function App() {
  return (
    <div className="h-screen flex flex-col overflow-hidden text-xs text-[#2b2b2b] bg-[linear-gradient(to_bottom,#ece4df,#ede5e0_45%,#ece5da)] font-[Noto_Sans,Noto_Sans_CJK_SC,sans-serif]">
      <TitleBar />
      <MenuBar />
      <Ribbon />
      <div className="flex-1 min-h-0 flex">
        <OutlinePanel />
        <Document />
        <StylePanel />
        <Rail />
      </div>
      <StatusBar />
      <InputMethod />
      <Watermark />
    </div>
  );
}
